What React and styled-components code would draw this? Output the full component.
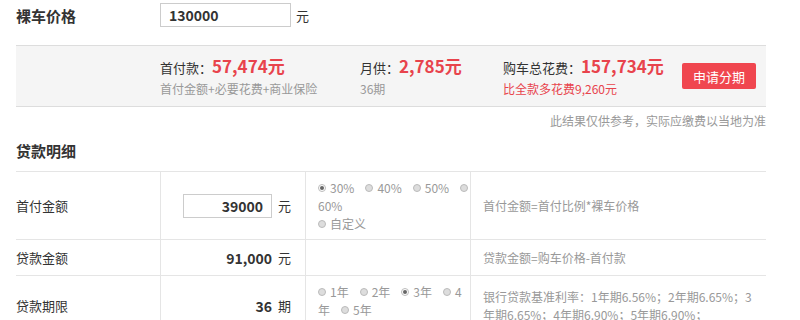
import React from "react";
import styled, { createGlobalStyle } from "styled-components";

const GlobalStyle = createGlobalStyle`
  body {
    margin: 0;
    background: #fff;
    font-family: "Noto Sans CJK SC", "Noto Sans", sans-serif;
    color: #333;
  }
`;

const Page = styled.div`
  width: 750px;
  margin-left: 16px;
`;

const PriceRow = styled.div`
  display: flex;
  align-items: center;
  height: 24px;
  margin-top: 3px;
`;

const Title = styled.div`
  width: 144px;
  font-size: 15px;
  font-weight: 700;
  color: #333;
`;

const Input = styled.div`
  box-sizing: border-box;
  width: ${(p) => p.$width}px;
  height: 24px;
  border: 1px solid #ccc;
  padding: 0 8px;
  display: flex;
  align-items: center;
  justify-content: ${(p) => (p.$right ? "flex-end" : "flex-start")};
  font-size: 14px;
  font-weight: 700;
  color: #333;
`;

const Unit = styled.span`
  margin-left: ${(p) => p.$gap || 5}px;
  font-size: 13px;
  color: #333;
`;

const Summary = styled.div`
  margin-top: 18px;
  height: 60px;
  background: #f5f5f5;
  border-top: 1px solid #ddd;
  border-bottom: 1px solid #ddd;
  display: flex;
  align-items: center;
  padding-left: 144px;
`;

const Item = styled.div`
  width: ${(p) => p.$width}px;
  flex-shrink: 0;
  display: flex;
  flex-direction: column;
  margin-top: 1px;
  white-space: nowrap;
`;

const ItemTop = styled.div`
  display: flex;
  align-items: baseline;
  font-size: 13px;
  color: #333;
  height: 22px;
  line-height: 22px;
`;

const Big = styled.span`
  font-size: 17px;
  font-weight: 700;
  color: #e8434c;
`;

const ItemSub = styled.div`
  font-size: 12px;
  line-height: 18px;
  color: ${(p) => (p.$red ? "#e8434c" : "#999")};
  margin-top: 3px;
`;

const Button = styled.div`
  margin-left: auto;
  margin-right: 10px;
  width: 74px;
  height: 26px;
  border-radius: 2px;
  background: #f0464f;
  color: #fff;
  font-size: 13px;
  display: flex;
  align-items: center;
  justify-content: center;
`;

const Note = styled.div`
  text-align: right;
  font-size: 12px;
  color: #999;
  margin-top: 5px;
  line-height: 18px;
`;

const Section = styled.div`
  font-size: 15px;
  font-weight: 700;
  color: #333;
  margin-top: 10px;
  height: 22px;
  line-height: 22px;
`;

const Table = styled.div`
  margin-top: 9px;
  border-top: 1px solid #e5e5e5;
`;

const Row = styled.div`
  display: grid;
  grid-template-columns: 144px 145px 165px 296px;
  min-height: ${(p) => p.$h}px;
  border-bottom: 1px solid #e5e5e5;
`;

const Cell = styled.div`
  box-sizing: border-box;
  display: flex;
  align-items: ${(p) => (p.$top ? "flex-start" : "center")};
  font-size: 12px;
  color: #999;
  line-height: 18px;
  border-left: ${(p) => (p.$first ? "none" : "1px solid #e5e5e5")};
  padding: ${(p) => p.$pad || "0"};
  justify-content: ${(p) => (p.$right ? "flex-end" : "flex-start")};
`;

const Label = styled.span`
  font-size: 13px;
  color: #333;
`;

const Value = styled.span`
  font-size: 14px;
  font-weight: 700;
  color: #333;
`;

const Options = styled.div`
  display: flex;
  flex-direction: column;
  font-size: 12px;
  color: #999;
  line-height: 18px;
`;

const OptLine = styled.div`
  display: flex;
  align-items: center;
  white-space: nowrap;
`;

const Dot = styled.span`
  box-sizing: border-box;
  width: 8px;
  height: 8px;
  border-radius: 50%;
  border: 1px solid #bbb;
  background: ${(p) => (p.$on ? "#fff" : "#ddd")};
  margin-right: 4px;
  position: relative;
  flex-shrink: 0;
  &::after {
    content: "";
    display: ${(p) => (p.$on ? "block" : "none")};
    position: absolute;
    left: 1px;
    top: 1px;
    width: 4px;
    height: 4px;
    border-radius: 50%;
    background: #666;
  }
`;

const OptText = styled.span`
  margin-right: 11px;
`;

// label may be split where the original wraps: text before the break stays on
// the dot's line, the rest goes to the next line
const Radio = ({ on, children }) => (
  <>
    <Dot $on={on} />
    {children ? <OptText>{children}</OptText> : null}
  </>
);

export default function App() {
  return (
    <Page>
      <GlobalStyle />
      <PriceRow>
        <Title>裸车价格</Title>
        <Input $width={131}>130000</Input>
        <Unit>元</Unit>
      </PriceRow>

      <Summary>
        <Item $width={200}>
          <ItemTop>
            首付款：<Big>57,474元</Big>
          </ItemTop>
          <ItemSub>首付金额+必要花费+商业保险</ItemSub>
        </Item>
        <Item $width={143}>
          <ItemTop>
            月供：<Big>2,785元</Big>
          </ItemTop>
          <ItemSub>36期</ItemSub>
        </Item>
        <Item $width={179}>
          <ItemTop>
            购车总花费：<Big>157,734元</Big>
          </ItemTop>
          <ItemSub $red>比全款多花费9,260元</ItemSub>
        </Item>
        <Button>申请分期</Button>
      </Summary>

      <Note>此结果仅供参考，实际应缴费以当地为准</Note>

      <Section>贷款明细</Section>

      <Table>
        <Row $h={67}>
          <Cell $first>
            <Label>首付金额</Label>
          </Cell>
          <Cell $right $pad="0 14px 0 0">
            <Input $width={89} $right>
              39000
            </Input>
            <Unit $gap={6}>元</Unit>
          </Cell>
          <Cell $pad="0 2px 0 12px">
            <Options>
              <OptLine>
                <Radio on>30%</Radio>
                <Radio>40%</Radio>
                <Radio>50%</Radio>
                <Radio />
              </OptLine>
              <OptLine>60%</OptLine>
              <OptLine>
                <Radio>自定义</Radio>
              </OptLine>
            </Options>
          </Cell>
          <Cell $pad="0 0 0 12px">首付金额=首付比例*裸车价格</Cell>
        </Row>
        <Row $h={35}>
          <Cell $first>
            <Label>贷款金额</Label>
          </Cell>
          <Cell $right $pad="0 14px 0 0">
            <Value>91,000</Value>
            <Unit $gap={6}>元</Unit>
          </Cell>
          <Cell />
          <Cell $pad="0 0 0 12px">贷款金额=购车价格-首付款</Cell>
        </Row>
        <Row $h={60}>
          <Cell $first>
            <Label>贷款期限</Label>
          </Cell>
          <Cell $right $pad="0 14px 0 0">
            <Value>36</Value>
            <Unit $gap={6}>期</Unit>
          </Cell>
          <Cell $top $pad="7px 2px 0 12px">
            <Options>
              <OptLine>
                <Radio>1年</Radio>
                <Radio>2年</Radio>
                <Radio on>3年</Radio>
                <Radio>4</Radio>
              </OptLine>
              <OptLine>
                <OptText>年</OptText>
                <Radio>5年</Radio>
              </OptLine>
            </Options>
          </Cell>
          <Cell $pad="0 10px 0 12px">
            银行贷款基准利率：1年期6.56%；2年期6.65%；3年期6.65%；4年期6.90%；5年期6.90%；
          </Cell>
        </Row>
      </Table>
    </Page>
  );
}
